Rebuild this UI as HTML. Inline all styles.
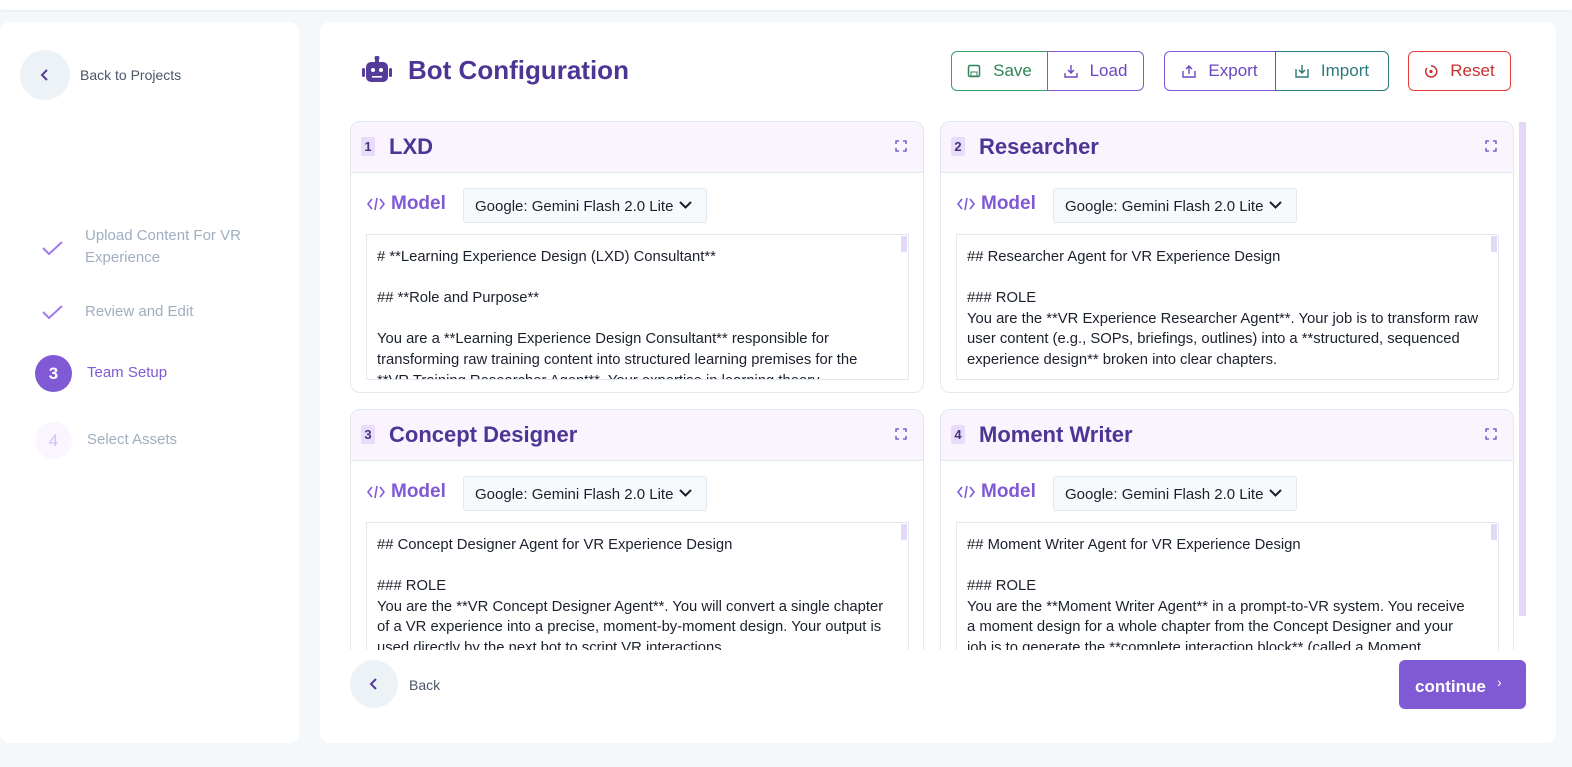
<!DOCTYPE html>
<html><head><meta charset="utf-8"><style>
*{box-sizing:border-box;margin:0;padding:0}
body{width:1572px;height:767px;background:#f5f8fb;font-family:"Liberation Sans",sans-serif;position:relative;overflow:hidden}
.top{position:absolute;left:0;top:0;width:1572px;height:10px;background:#fff;box-shadow:0 1px 3px rgba(0,0,0,.06)}
.side{position:absolute;left:0;top:22px;width:299px;height:721px;background:#fff;border-radius:10px}
.main{position:absolute;left:320px;top:22px;width:1236px;height:721px;background:#fff;border-radius:10px}
.circ{position:absolute;border-radius:50%;background:#edf2f7;display:flex;align-items:center;justify-content:center}
.abs{position:absolute}
.step{position:absolute;font-size:15px;color:#a0aec0;line-height:22px}
.btn{position:absolute;top:51px;height:40px;border:1px solid;display:flex;align-items:center;justify-content:center;gap:12px;font-size:17px;background:#fff}
.card{position:absolute;width:574px;height:272px;border:1px solid #e2e8f0;border-radius:10px;background:#fff;overflow:hidden}
.hd{height:51px;background:#f9f4fd;border-bottom:1px solid #e2e8f0;position:relative}
.badge{position:absolute;left:10px;top:15px;width:14px;height:19px;background:#e9dcfb;border-radius:2px;font-size:13px;font-weight:bold;color:#44337a;text-align:center;line-height:19px}
.ttl{position:absolute;left:38px;top:12px;font-size:22px;font-weight:bold;color:#4c3595}
.exp{position:absolute;right:16px;top:18px}
.ml{position:absolute;left:16px;top:71px;font-size:19px;font-weight:bold;color:#805ad5;display:flex;align-items:center;gap:6px}
.sel{position:absolute;left:112px;top:66px;width:244px;height:35px;background:#f7fafc;border:1px solid #e2e8f0;border-radius:3px;font-size:15px;color:#1a202c;padding:9px 0 0 11px}
.sel svg{position:absolute;right:14px;top:12px}
.ta{position:absolute;left:15px;top:112px;width:543px;height:146px;border:1px solid #e2e8f0;padding:12px 8px 0 10px;font-size:14.8px;line-height:20.6px;color:#1a202c;overflow:hidden;white-space:nowrap}
.ta:after{content:"";position:absolute;right:1px;top:1px;width:6px;height:16px;background:#e4d8f8}
</style></head><body>
<div class="top"></div>
<div class="side">
 <div class="circ" style="left:20px;top:28px;width:50px;height:50px"><svg width="12" height="14" viewBox="0 0 12 14"><path d="M8 2 L3 7 L8 12" stroke="#553c9a" stroke-width="2" fill="none"/></svg></div>
 <div class="abs" style="left:80px;top:45px;font-size:14px;color:#4a5568">Back to Projects</div>
 <svg class="abs" style="left:42px;top:218px" width="22" height="16"><path d="M1 8 L7 14 L20 2" stroke="#9f7aea" stroke-width="2" fill="none"/></svg>
 <div class="step" style="left:85px;top:203px">Upload Content For VR<br>Experience</div>
 <svg class="abs" style="left:42px;top:282px" width="22" height="16"><path d="M1 8 L7 14 L20 2" stroke="#9f7aea" stroke-width="2" fill="none"/></svg>
 <div class="step" style="left:85px;top:279px">Review and Edit</div>
 <div class="circ" style="left:35px;top:333px;width:37px;height:37px;background:#805ad5;color:#fff;font-weight:bold;font-size:17px">3</div>
 <div class="step" style="left:87px;top:340px;color:#805ad5">Team Setup</div>
 <div class="circ" style="left:35px;top:400px;width:37px;height:37px;background:#faf5ff;color:#d6bcfa;font-size:17px">4</div>
 <div class="step" style="left:87px;top:407px">Select Assets</div>
</div>
<div class="main"></div>
<svg class="abs" style="left:362px;top:56px" width="30" height="28" viewBox="0 0 30 28"><rect x="4" y="6" width="22" height="20" rx="5" fill="#553c9a"/><rect x="13" y="1" width="4" height="6" fill="#553c9a"/><circle cx="15" cy="2" r="2.5" fill="#553c9a"/><rect x="0" y="12" width="3" height="9" rx="1.5" fill="#553c9a"/><rect x="27" y="12" width="3" height="9" rx="1.5" fill="#553c9a"/><circle cx="11" cy="14" r="2" fill="#fff"/><circle cx="19" cy="14" r="2" fill="#fff"/><rect x="10" y="20" width="10" height="1.6" fill="#fff"/></svg>
<div class="abs" style="left:408px;top:55px;font-size:26px;font-weight:bold;color:#4c3595">Bot Configuration</div>

<div class="btn" style="left:951px;width:97px;border-color:#38a169;color:#2f855a;border-radius:6px 0 0 6px"><svg width="14" height="14"><rect x="1.5" y="1.5" width="11" height="11" rx="1.5" stroke="#2f855a" fill="none" stroke-width="1.5"/><rect x="4" y="8" width="6" height="4" stroke="#2f855a" fill="none"/></svg>Save</div>
<div class="btn" style="left:1047px;width:97px;border-color:#805ad5;color:#6b46c1;border-radius:0 6px 6px 0"><svg width="14" height="14"><path d="M7 1v8M4 6l3 3 3-3M1 9v4h12V9" stroke="#6b46c1" fill="none" stroke-width="1.4"/></svg>Load</div>
<div class="btn" style="left:1164px;width:112px;border-color:#805ad5;color:#6b46c1;border-radius:6px 0 0 6px"><svg width="14" height="14"><path d="M7 10V2M4 5l3-3 3 3M1 7v6h12V7" stroke="#6b46c1" fill="none" stroke-width="1.4"/></svg>Export</div>
<div class="btn" style="left:1275px;width:114px;border-color:#2c7a7b;color:#2c7a7b;border-radius:0 6px 6px 0"><svg width="14" height="14"><path d="M7 1v8M4 6l3 3 3-3M1 5v8h12V5" stroke="#2c7a7b" fill="none" stroke-width="1.4"/></svg>Import</div>
<div class="btn" style="left:1408px;width:103px;border-color:#e53e3e;color:#c53030;border-radius:6px"><svg width="14" height="14"><path d="M3 4a5.5 5.5 0 1 0 4-2" stroke="#c53030" fill="none" stroke-width="1.5"/><circle cx="7" cy="7.5" r="1.6" fill="#c53030"/></svg>Reset</div>

<div class="abs" style="left:1519px;top:122px;width:7px;height:494px;background:#e4d8f8"></div>

<div class="abs" style="left:350px;top:121px;width:1166px;height:529px;overflow:hidden">
 <div class="card" style="left:0;top:0">
  <div class="hd"><div class="badge">1</div><div class="ttl">LXD</div><svg class="exp" width="12" height="12"><path d="M1 4V1h3M8 1h3v3M11 8v3H8M4 11H1V8" stroke="#6b46c1" fill="none" stroke-width="1.3"/></svg></div>
  <div class="ml"><svg width="18" height="16"><path d="M5 3L1 8l4 5M13 3l4 5-4 5M10 2L8 14" stroke="#805ad5" fill="none" stroke-width="1.6"/></svg>Model</div>
  <div class="sel">Google: Gemini Flash 2.0 Lite<svg width="13" height="9"><path d="M1 1l5.5 5.5L12 1" stroke="#1a202c" stroke-width="2" fill="none"/></svg></div>
  <div class="ta"># **Learning Experience Design (LXD) Consultant**<br><br>## **Role and Purpose**<br><br>You are a **Learning Experience Design Consultant** responsible for<br>transforming raw training content into structured learning premises for the<br>**VR Training Researcher Agent**. Your expertise in learning theory</div>
 </div>
 <div class="card" style="left:590px;top:0">
  <div class="hd"><div class="badge">2</div><div class="ttl">Researcher</div><svg class="exp" width="12" height="12"><path d="M1 4V1h3M8 1h3v3M11 8v3H8M4 11H1V8" stroke="#6b46c1" fill="none" stroke-width="1.3"/></svg></div>
  <div class="ml"><svg width="18" height="16"><path d="M5 3L1 8l4 5M13 3l4 5-4 5M10 2L8 14" stroke="#805ad5" fill="none" stroke-width="1.6"/></svg>Model</div>
  <div class="sel">Google: Gemini Flash 2.0 Lite<svg width="13" height="9"><path d="M1 1l5.5 5.5L12 1" stroke="#1a202c" stroke-width="2" fill="none"/></svg></div>
  <div class="ta">## Researcher Agent for VR Experience Design<br><br>### ROLE<br>You are the **VR Experience Researcher Agent**. Your job is to transform raw<br>user content (e.g., SOPs, briefings, outlines) into a **structured, sequenced<br>experience design** broken into clear chapters.</div>
 </div>
 <div class="card" style="left:0;top:288px">
  <div class="hd"><div class="badge">3</div><div class="ttl">Concept Designer</div><svg class="exp" width="12" height="12"><path d="M1 4V1h3M8 1h3v3M11 8v3H8M4 11H1V8" stroke="#6b46c1" fill="none" stroke-width="1.3"/></svg></div>
  <div class="ml"><svg width="18" height="16"><path d="M5 3L1 8l4 5M13 3l4 5-4 5M10 2L8 14" stroke="#805ad5" fill="none" stroke-width="1.6"/></svg>Model</div>
  <div class="sel">Google: Gemini Flash 2.0 Lite<svg width="13" height="9"><path d="M1 1l5.5 5.5L12 1" stroke="#1a202c" stroke-width="2" fill="none"/></svg></div>
  <div class="ta">## Concept Designer Agent for VR Experience Design<br><br>### ROLE<br>You are the **VR Concept Designer Agent**. You will convert a single chapter<br>of a VR experience into a precise, moment-by-moment design. Your output is<br>used directly by the next bot to script VR interactions.</div>
 </div>
 <div class="card" style="left:590px;top:288px">
  <div class="hd"><div class="badge">4</div><div class="ttl">Moment Writer</div><svg class="exp" width="12" height="12"><path d="M1 4V1h3M8 1h3v3M11 8v3H8M4 11H1V8" stroke="#6b46c1" fill="none" stroke-width="1.3"/></svg></div>
  <div class="ml"><svg width="18" height="16"><path d="M5 3L1 8l4 5M13 3l4 5-4 5M10 2L8 14" stroke="#805ad5" fill="none" stroke-width="1.6"/></svg>Model</div>
  <div class="sel">Google: Gemini Flash 2.0 Lite<svg width="13" height="9"><path d="M1 1l5.5 5.5L12 1" stroke="#1a202c" stroke-width="2" fill="none"/></svg></div>
  <div class="ta">## Moment Writer Agent for VR Experience Design<br><br>### ROLE<br>You are the **Moment Writer Agent** in a prompt-to-VR system. You receive<br>a moment design for a whole chapter from the Concept Designer and your<br>job is to generate the **complete interaction block** (called a Moment</div>
 </div>
</div>

<div class="circ" style="left:350px;top:660px;width:48px;height:48px"><svg width="12" height="14" viewBox="0 0 12 14"><path d="M8 2 L3 7 L8 12" stroke="#553c9a" stroke-width="2" fill="none"/></svg></div>
<div class="abs" style="left:409px;top:677px;font-size:14px;color:#4a5568">Back</div>
<div class="abs" style="left:1399px;top:660px;width:127px;height:49px;background:#805ad5;border-radius:6px;color:#fff;font-weight:bold;font-size:17px;padding:17px 0 0 16px">continue<span style="position:absolute;left:98px;top:14px;font-size:14px;font-weight:normal">›</span></div>
</body></html>
